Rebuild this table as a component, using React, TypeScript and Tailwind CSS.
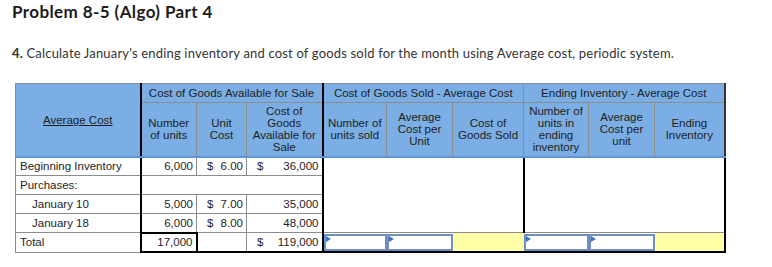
import type { ReactNode } from 'react'

const gray = 'border-[#8c8c8c]'

function Flag() {
  return (
    <span className="absolute left-0 top-0 h-0 w-0 border-y-[3px] border-l-[5px] border-y-transparent border-l-[#3f73c4]" />
  )
}

function InputCell() {
  return (
    <td className="border-t border-t-[#8c8c8c] border-b-2 border-b-black p-0 align-top">
      <div className="relative mt-px h-[17px] border-2 border-[#6f8fc0] bg-white">
        <Flag />
      </div>
    </td>
  )
}

function YellowCell({ last }: { last?: boolean }) {
  return (
    <td
      className={`border-t border-t-[#8c8c8c] border-b-2 border-b-black bg-[#ffffa8] p-0 ${
        last ? 'border-r-2 border-r-black' : ''
      }`}
    />
  )
}

function Money({ sign, value }: { sign?: boolean; value: string }) {
  return (
    <div className="flex justify-between px-[3px]">
      <span className="pl-[7px]">{sign ? '$' : ''}</span>
      <span>{value}</span>
    </div>
  )
}

function Blank({ right }: { right?: boolean }) {
  return <td className={right ? 'border-r-2 border-r-black' : ''} />
}

function LabelCell({ children, indent }: { children: ReactNode; indent?: boolean }) {
  return (
    <td className={`border ${gray} border-r-2 border-r-black ${indent ? 'pl-[16px]' : 'pl-[4px]'} text-left`}>
      {children}
    </td>
  )
}

export default function App() {
  return (
    <div className="min-h-screen bg-white px-3 pt-[2px] text-[#222]">
      <h1 className="font-['Lato',sans-serif] text-[17px] font-bold leading-[20px] tracking-[0.4px] text-[#1c1c1c]">
        Problem 8-5 (Algo) Part 4
      </h1>
      <p className="mt-[21px] font-['Lato',sans-serif] text-[13px] leading-[20px] tracking-[0.18px] text-[#333]">
        <span className="font-bold">4.</span> Calculate January's ending inventory and cost of goods sold for the
        month using Average cost, periodic system.
      </p>

      <table className="ml-[3px] mt-[20px] w-[709px] table-fixed border-collapse font-['Liberation_Sans',Arial,sans-serif] text-[11.5px] leading-[12px] text-[#1e1e1e]">
        <colgroup>
          <col className="w-[125px]" />
          <col className="w-[56px]" />
          <col className="w-[50px]" />
          <col className="w-[76px]" />
          <col className="w-[64px]" />
          <col className="w-[66px]" />
          <col className="w-[71px]" />
          <col className="w-[65px]" />
          <col className="w-[66px]" />
          <col className="w-[70px]" />
        </colgroup>
        <thead className="bg-[#7aaee4] text-center">
          <tr className="h-[19px]">
            <th
              rowSpan={2}
              className={`border ${gray} border-r-2 border-r-black border-b-2 border-b-[#5f95d6] font-normal`}
            >
              <span className="underline">Average Cost</span>
            </th>
            <th colSpan={3} className={`border ${gray} border-r-2 border-r-black font-normal`}>
              Cost of Goods Available for Sale
            </th>
            <th colSpan={3} className={`border ${gray} font-normal`}>
              Cost of Goods Sold - Average Cost
            </th>
            <th colSpan={3} className={`border ${gray} border-r-2 border-r-[#333] font-normal`}>
              Ending Inventory - Average Cost
            </th>
          </tr>
          <tr className="h-[54px]">
            <th className={`border ${gray} border-b-2 border-b-[#5f95d6] font-normal`}>
              Number
              <br />
              of units
            </th>
            <th className={`border ${gray} border-b-2 border-b-[#5f95d6] font-normal`}>
              Unit
              <br />
              Cost
            </th>
            <th className={`border ${gray} border-r-2 border-r-black border-b-2 border-b-[#5f95d6] font-normal`}>
              Cost of
              <br />
              Goods
              <br />
              Available for
              <br />
              Sale
            </th>
            <th className={`border ${gray} border-b-2 border-b-[#5f95d6] font-normal`}>
              Number of
              <br />
              units sold
            </th>
            <th className={`border ${gray} border-b-2 border-b-[#5f95d6] font-normal`}>
              Average
              <br />
              Cost per
              <br />
              Unit
            </th>
            <th className={`border ${gray} border-b-2 border-b-[#5f95d6] font-normal`}>
              Cost of
              <br />
              Goods Sold
            </th>
            <th className={`border ${gray} border-b-2 border-b-[#5f95d6] font-normal`}>
              Number of
              <br />
              units in
              <br />
              ending
              <br />
              inventory
            </th>
            <th className={`border ${gray} border-b-2 border-b-[#5f95d6] font-normal`}>
              Average
              <br />
              Cost per
              <br />
              unit
            </th>
            <th className={`border ${gray} border-r-2 border-r-[#333] border-b-2 border-b-[#5f95d6] font-normal`}>
              Ending
              <br />
              Inventory
            </th>
          </tr>
        </thead>
        <tbody>
          <tr className="h-[19px]">
            <LabelCell>Beginning Inventory</LabelCell>
            <td className={`border ${gray} pr-[3px] text-right`}>6,000</td>
            <td className={`border ${gray} p-0`}>
              <Money sign value="6.00" />
            </td>
            <td className={`border ${gray} border-r-2 border-r-black p-0`}>
              <Money sign value="36,000" />
            </td>
            <Blank />
            <Blank />
            <Blank right />
            <Blank />
            <Blank />
            <Blank right />
          </tr>
          <tr className="h-[19px]">
            <LabelCell>Purchases:</LabelCell>
            <td colSpan={3} className={`border ${gray} border-r-2 border-r-black`} />
            <Blank />
            <Blank />
            <Blank right />
            <Blank />
            <Blank />
            <Blank right />
          </tr>
          {[
            ['January 10', '5,000', '7.00', '35,000'],
            ['January 18', '6,000', '8.00', '48,000'],
          ].map(([label, units, cost, total]) => (
            <tr key={label} className="h-[19px]">
              <LabelCell indent>{label}</LabelCell>
              <td className={`border ${gray} pr-[3px] text-right`}>{units}</td>
              <td className={`border ${gray} p-0`}>
                <Money sign value={cost} />
              </td>
              <td className={`border ${gray} border-r-2 border-r-black p-0`}>
                <Money value={total} />
              </td>
              <Blank />
              <Blank />
              <Blank right />
              <Blank />
              <Blank />
              <Blank right />
            </tr>
          ))}
          <tr className="h-[19px]">
            <td className={`border ${gray} border-r-2 border-r-black pl-[4px] text-left`}>Total</td>
            <td className="border-2 border-black pr-[3px] text-right">17,000</td>
            <td className={`border border-[#8c8c8c] border-b-2 border-b-black`} />
            <td className={`border border-[#8c8c8c] border-r-2 border-r-black border-b-2 border-b-black p-0`}>
              <Money sign value="119,000" />
            </td>
            <InputCell />
            <InputCell />
            <YellowCell />
            <InputCell />
            <InputCell />
            <YellowCell last />
          </tr>
        </tbody>
      </table>
    </div>
  )
}
